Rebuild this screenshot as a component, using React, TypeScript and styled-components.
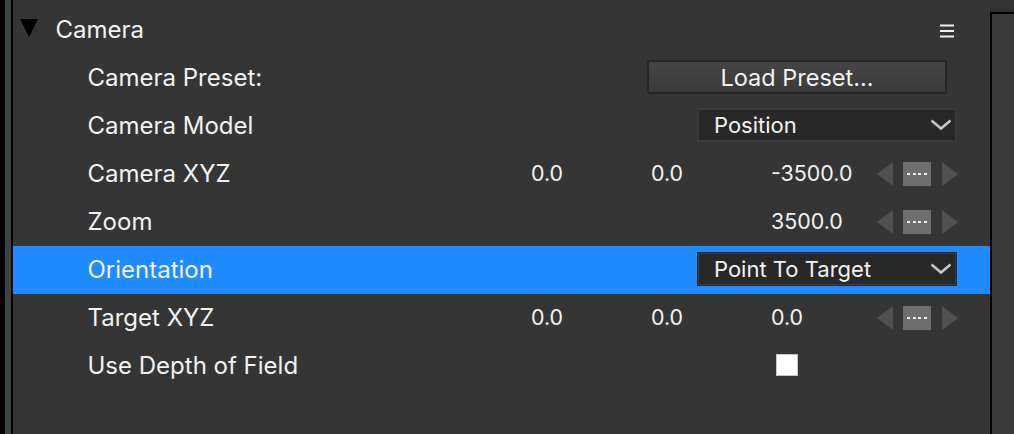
import styled, { createGlobalStyle } from 'styled-components';

const GlobalStyle = createGlobalStyle`
  html, body {
    margin: 0;
    height: 100%;
    background: #000;
    overflow: hidden;
  }
  #root {
    height: 100%;
  }
`;

const Page = styled.div`
  display: flex;
  height: 434px;
  background: #000;
  color: #f2f2f2;
  font-family: Inter, 'Liberation Sans', sans-serif;
  font-size: 24px;
`;

const SideStrip = styled.div`
  width: 6px;
  margin-left: 5px;
  margin-right: 2px;
  background: #3a4443;
`;

const Panel = styled.main`
  width: 977px;
  background: #353535;
`;

const RightPane = styled.aside`
  flex: 1;
  background: #353535;
  padding-top: 8px;
`;

const RightPaneHead = styled.div`
  height: 4px;
  background: #2e2e2e;
`;

const RightPaneBody = styled.div`
  height: 420px;
  border-top: 2px solid #000;
  border-left: 2px solid #000;
  background: #3a3a3a;
`;

const Header = styled.div`
  display: flex;
  align-items: center;
  height: 54px;
  padding: 0 36px 0 7px;
`;

const Caret = styled.svg`
  width: 18px;
  height: 18px;
  margin-right: 18px;
  margin-top: 2px;
`;

const Title = styled.span`
  flex: 1;
  margin-left: -0.5px;
  margin-top: 4px;
`;

const MenuIcon = styled.svg`
  width: 14px;
  height: 14px;
  margin-top: 8px;
`;

const Row = styled.div<{ $active?: boolean }>`
  display: flex;
  align-items: center;
  box-sizing: border-box;
  height: 48px;
  padding: 0 0 2px 74.5px;
  background: ${(p) => (p.$active ? '#1e8cff' : 'transparent')};
`;

const Label = styled.span`
  width: 443.5px;
`;

const Value = styled.span`
  width: 120px;
  font-size: 21.4px;
`;

const LoadButton = styled.button`
  width: 300px;
  height: 34px;
  margin-left: 116px;
  padding: 0;
  border: 2px solid #262626;
  border-radius: 2px;
  background: linear-gradient(#454545, #3a3a3a);
  color: inherit;
  font: inherit;
  font-size: 23.5px;
`;

const Select = styled.div<{ $active?: boolean }>`
  display: flex;
  align-items: center;
  justify-content: space-between;
  box-sizing: border-box;
  width: 260px;
  height: 34px;
  margin-left: 166px;
  padding: ${(p) => (p.$active ? '0 4px 0 16px' : '0 3px 0 15px')};
  background: #282828;
  border: ${(p) => (p.$active ? '1px solid #1c2a3a' : '2px solid #3a3a3a')};
  box-shadow: ${(p) => (p.$active ? 'inset 0 0 0 1px #3c3c3c' : 'none')};
  font-size: 22px;
`;

const Chevron = styled.svg`
  width: 22px;
  height: 12px;
`;

const Stepper = styled.div`
  display: flex;
  align-items: center;
  margin: 2px 0 0 -14px;
`;

const Arrow = styled.svg`
  width: 16px;
  height: 24px;
  fill: #505050;
`;

const DashBox = styled.div`
  display: flex;
  align-items: center;
  justify-content: center;
  gap: 2.67px;
  width: 28px;
  height: 24px;
  margin: 0 11px 0 10px;
  padding-bottom: 1px;
  box-sizing: border-box;
  background: #6e6e6e;
`;

const Dash = styled.i`
  width: 3px;
  height: 2px;
  background: #eee;
`;

const Checkbox = styled.span`
  box-sizing: border-box;
  width: 22px;
  height: 22px;
  margin-left: 245px;
  background: #fff;
  border: 1px solid #c4c4c4;
`;

const StepButtons = () => (
  <Stepper>
    <Arrow viewBox="0 0 16 24">
      <path d="M16 0V24L0 12Z" />
    </Arrow>
    <DashBox>
      <Dash />
      <Dash />
      <Dash />
      <Dash />
    </DashBox>
    <Arrow viewBox="0 0 16 24">
      <path d="M0 0V24L16 12Z" />
    </Arrow>
  </Stepper>
);

const ValuesRow = ({ label, values }: { label: string; values: string[] }) => (
  <Row>
    <Label>{label}</Label>
    <Value>{values[0]}</Value>
    <Value>{values[1]}</Value>
    <Value>{values[2]}</Value>
    <StepButtons />
  </Row>
);

const SelectArrow = () => (
  <Chevron viewBox="0 0 22 12">
    <path d="M1.5 1.5L11 9.5L20.5 1.5" fill="none" stroke="#c8c8c8" strokeWidth="2.5" />
  </Chevron>
);

export default function App() {
  return (
    <Page>
      <GlobalStyle />
      <SideStrip />
      <Panel>
        <Header>
          <Caret viewBox="0 0 18 18">
            <path d="M0 0H18L9 18Z" fill="#000" />
          </Caret>
          <Title>Camera</Title>
          <MenuIcon viewBox="0 0 14 14">
            <path d="M0 1.5H14M0 7H14M0 12.5H14" stroke="#eee" strokeWidth="1.8" />
          </MenuIcon>
        </Header>
        <Row>
          <Label>Camera Preset:</Label>
          <LoadButton>Load Preset...</LoadButton>
        </Row>
        <Row>
          <Label>Camera Model</Label>
          <Select>
            Position
            <SelectArrow />
          </Select>
        </Row>
        <ValuesRow label="Camera XYZ" values={['0.0', '0.0', '-3500.0']} />
        <ValuesRow label="Zoom" values={['', '', '3500.0']} />
        <Row $active>
          <Label>Orientation</Label>
          <Select $active>
            Point To Target
            <SelectArrow />
          </Select>
        </Row>
        <ValuesRow label="Target XYZ" values={['0.0', '0.0', '0.0']} />
        <Row>
          <Label>Use Depth of Field</Label>
          <Checkbox />
        </Row>
      </Panel>
      <RightPane>
        <RightPaneHead />
        <RightPaneBody />
      </RightPane>
    </Page>
  );
}
